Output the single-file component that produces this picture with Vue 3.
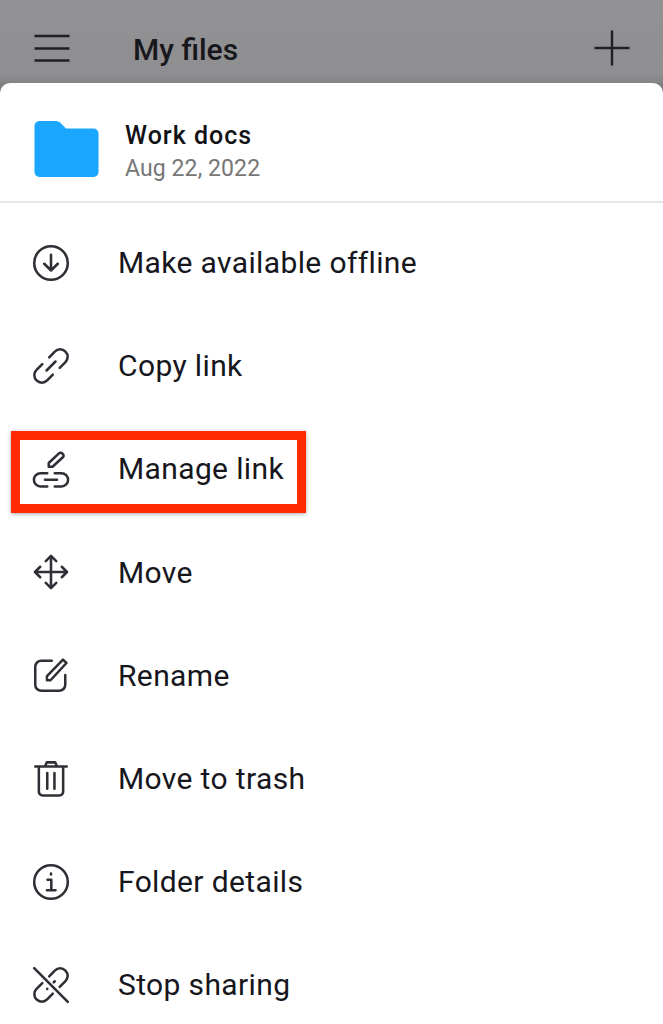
<template>
  <div class="screen">
    <header class="topbar">
      <svg class="menu-icon" viewBox="0 0 36 28" fill="none" stroke="#1f1f24" stroke-width="2.4">
        <path d="M0.5 2H35.500M0.5 14.500H35.500M0.5 26.500H35.500" />
      </svg>
      <h1 class="topbar-title">My files</h1>
      <svg class="plus-icon" viewBox="0 0 36 36" fill="none" stroke="#1f1f24" stroke-width="2.4">
        <path d="M18 0.5V35.500M0.5 18H35.500" />
      </svg>
    </header>

    <section class="sheet">
      <div class="sheet-head">
        <svg class="folder" viewBox="0 0 64 56">
          <path
            fill="#1ba7ff"
            d="M0 5a5 5 0 0 1 5-5h16c2 0 3.400.6 4.800 1.800L31.500 7.500H59a5 5 0 0 1 5 5V51a5 5 0 0 1-5 5H5a5 5 0 0 1-5-5Z"
          />
        </svg>
        <div class="head-text">
          <div class="head-name">Work docs</div>
          <div class="head-date">Aug 22, 2022</div>
        </div>
      </div>

      <ul class="menu">
        <li v-for="item in items" :key="item.label" class="menu-row">
          <svg
            class="row-icon"
            viewBox="0 0 24 24"
            fill="none"
            stroke="#2f2f36"
            stroke-width="1.700"
            stroke-linecap="round"
            stroke-linejoin="round"
          >
            <path :d="item.icon" />
          </svg>
          <span class="row-label">{{ item.label }}</span>
          <span v-if="item.marked" class="mark"></span>
        </li>
      </ul>
    </section>
  </div>
</template>

<script setup>
const circle = 'M12 .8a11.200 11.200 0 1 1 0 22.400a11.200 11.200 0 1 1 0-22.400Z'
const chainEnds =
  'M10.800 6.200L14.560 2.360a5 5 0 0 1 7.080 7.080L17.800 13.200M13.200 17.800L9.440 21.640a5 5 0 0 1-7.080-7.080L6.200 10.800'

const items = [
  { label: 'Make available offline', icon: circle + 'M12 6.500V17M7.500 12.500L12 17L16.500 12.500' },
  { label: 'Copy link', icon: 'M9 15L15 9' + chainEnds },
  {
    label: 'Manage link',
    marked: true,
    icon:
      'M10.500 10.500V8L17.300 1.600a1.500 1.500 0 0 1 2.200 0l.4.4a1.500 1.500 0 0 1 0 2.200L13 10.500ZM9.500 14.800H5a4.400 4.400 0 0 0 0 8.800H9.500M14.500 14.800H19a4.400 4.400 0 0 1 0 8.800H14.500M8 19.200H16',
  },
  {
    label: 'Move',
    icon:
      'M12 1.500V22.500M1.500 12H22.500M8.500 4.800L12 1.300L15.500 4.800M8.500 19.200L12 22.700L15.500 19.200M4.800 8.500L1.300 12L4.800 15.500M19.200 8.500L22.700 12L19.200 15.500',
  },
  {
    label: 'Rename',
    icon:
      'M12.500 2.500H5.500a4 4 0 0 0-4 4V18.500a4 4 0 0 0 4 4H17.500a4 4 0 0 0 4-4V12M9.300 15.500V12.700L20 1.800L22.300 4L11.700 15.500Z',
  },
  {
    label: 'Move to trash',
    icon:
      'M1.500 3.700H22.500M8 3.700L9.200 .9H14.800L16 3.700M3.900 3.700V20.500a2.500 2.500 0 0 0 2.500 2.500H17.600a2.500 2.500 0 0 0 2.500-2.500V3.700M9.500 8V18.500M14.300 8V18.500',
  },
  {
    label: 'Folder details',
    icon: circle + 'M12 6.300V7M9.700 10.500H12.200V17.300M9.300 17.500H15',
  },
  {
    label: 'Stop sharing',
    icon: 'M9.500 14.500V14.600M14.500 9.500L13.800 10.200' + chainEnds + 'M.8 .8L23.200 23.200',
  },
]
</script>

<style>
html,
body {
  margin: 0;
  background: #fff;
}
</style>

<style scoped>
.screen {
  width: 663px;
  height: 1024px;
  overflow: hidden;
  font-family: Roboto, "Liberation Sans", sans-serif;
  color: #16161d;
  background: #7f7f81;
}

.topbar {
  height: 83px;
  box-sizing: border-box;
  padding: 1px 34px 0;
  display: flex;
  align-items: center;
  background: linear-gradient(#929294 0, #8f8f91 88%, #848486 100%);
}

.menu-icon {
  width: 36px;
  height: 28px;
  flex-shrink: 0;
  margin-top: 12px;
}

.topbar-title {
  margin: 14px 0 0 63px;
  font-size: 30px;
  font-weight: 500;
  color: #17171c;
  flex: 1;
}

.plus-icon {
  width: 36px;
  height: 36px;
  flex-shrink: 0;
  margin: 12px -1px 0 0;
}

.sheet {
  height: 941px;
  background: #fff;
  border-radius: 10px 10px 0 0;
}

.sheet-head {
  height: 120px;
  box-sizing: border-box;
  padding: 38px 34px 0;
  display: flex;
  align-items: flex-start;
  gap: 27px;
  border-bottom: 2px solid #e6e6e8;
}

.folder {
  width: 65px;
  height: 56px;
  flex-shrink: 0;
}

.head-text {
  margin-top: -1px;
  margin-left: -1px;
}

.head-name {
  font-size: 25px;
  font-weight: 500;
  letter-spacing: 1px;
  line-height: 32px;
  color: #111116;
}

.head-date {
  font-size: 23px;
  letter-spacing: 0.1px;
  line-height: 33px;
  color: #767676;
}

.menu {
  list-style: none;
  margin: 0;
  padding: 8px 0 0;
}

.menu-row {
  position: relative;
  height: 103.200px;
  padding-left: 33px;
  display: flex;
  align-items: center;
  gap: 49px;
}

.row-icon {
  width: 36px;
  height: 36px;
  flex-shrink: 0;
  overflow: visible;
}

.row-label {
  font-size: 30px;
  letter-spacing: 0.37px;
}

.mark {
  position: absolute;
  left: 11px;
  top: 14px;
  width: 295px;
  height: 82px;
  box-sizing: border-box;
  border: 9px solid #ff2a00;
  box-shadow: 0 1px 4px rgba(0, 0, 0, 0.35);
}
</style>
